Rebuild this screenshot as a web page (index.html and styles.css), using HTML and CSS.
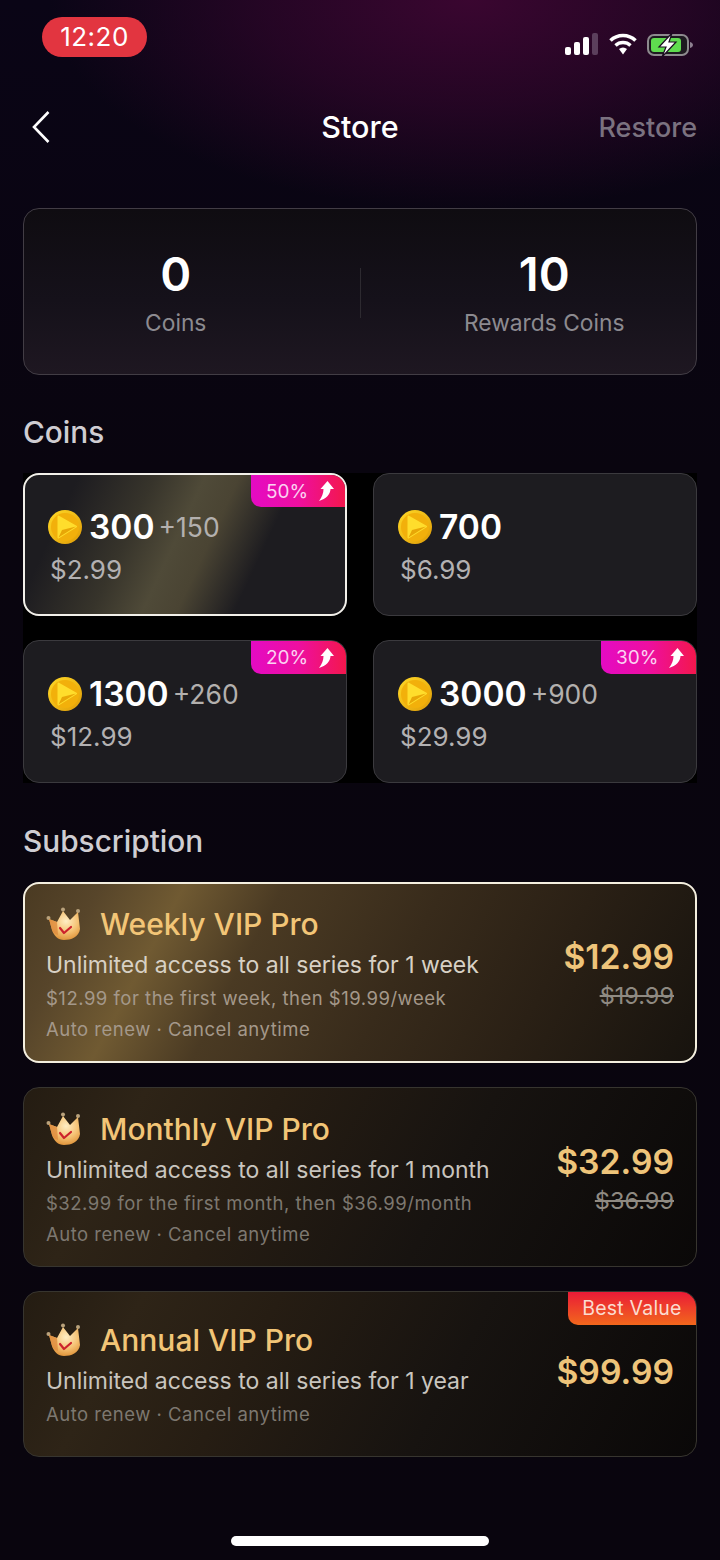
FILE: index.html
```html
<!DOCTYPE html>
<html>
<head lang="en">
    <meta charset="UTF-8">
    <title>Store</title>
    <link rel="stylesheet" href="styles.css">
</head>
<body>
<svg class="defs" width="0" height="0">
    <defs>
        <linearGradient id="coinEdge" x1="0" y1="0" x2="1" y2="1">
            <stop offset="0" stop-color="#ffd928"/>
            <stop offset="1" stop-color="#e09c06"/>
        </linearGradient>
        <radialGradient id="crownFill" cx="0.55" cy="0.35" r="0.7">
            <stop offset="0" stop-color="#ffeec4"/>
            <stop offset="0.55" stop-color="#f5c274"/>
            <stop offset="1" stop-color="#dc8d32"/>
        </radialGradient>
        <symbol id="coin" viewBox="0 0 34 34">
            <circle cx="17" cy="17" r="17" fill="url(#coinEdge)"/>
            <circle cx="17" cy="17" r="14" fill="#f2b00b"/>
            <path d="M10.500 6.500 L28 16.500 L10.500 27.500 Z" fill="#ffdd2c" stroke="#ffdd2c" stroke-width="2" stroke-linejoin="round"/>
            <path d="M10.500 27.500 L28 16.500 L14 20 Z" fill="#e8a707"/>
        </symbol>
        <symbol id="crown" viewBox="0 0 36 34">
            <circle cx="2.500" cy="11" r="2" fill="#b9a27c"/>
            <circle cx="17" cy="2.500" r="2" fill="#b9a27c"/>
            <circle cx="32" cy="4" r="2" fill="#b9a27c"/>
            <path d="M3 12 L11 15 L17 4 L24 13 L32 5 L34 22 C33 30 25 33 18 33 C12 33 8 29 6 23 Z" fill="url(#crownFill)"/>
            <path d="M3 12 L11 15 L12 28 C8 27 7 25 6 23 Z" fill="#df8c3f" opacity="0.8"/>
            <path d="M14 21 L18 26 L25 20" fill="none" stroke="#cc222c" stroke-width="2.200" stroke-linecap="round" stroke-linejoin="round"/>
        </symbol>
        <symbol id="arrow" viewBox="0 0 16 20">
            <path d="M9.500 0 L16 8 L12.500 8 C12.500 13 8 18 1 20 C4 16 5.500 12 5.500 8 L2.500 8 Z" fill="#fff"/>
        </symbol>
    </defs>
</svg>

<div class="page">
    <div class="status-bar">
        <div class="time">12:20</div>
        <div class="status-icons">
            <svg width="34" height="22" viewBox="0 0 34 22">
                <rect x="0" y="14" width="6" height="8" rx="2" fill="#fff"/>
                <rect x="9" y="9" width="6" height="13" rx="2" fill="#fff"/>
                <rect x="18" y="4" width="6" height="18" rx="2" fill="#fff"/>
                <rect x="27" y="0" width="6" height="22" rx="2" fill="#5b3f5c"/>
            </svg>
            <svg width="28" height="22" viewBox="0 0 28 22">
                <path d="M1.500 7.500 A18 18 0 0 1 26.500 7.500" fill="none" stroke="#fff" stroke-width="3.600"/>
                <path d="M6.500 12.500 A11 11 0 0 1 21.500 12.500" fill="none" stroke="#fff" stroke-width="3.400"/>
                <path d="M10 16 L14 21.500 L18 16 A6 6 0 0 0 10 16 Z" fill="#fff"/>
            </svg>
            <svg width="47" height="24" viewBox="0 0 47 24">
                <rect x="1" y="2" width="40" height="20" rx="6" fill="#1e1a20" stroke="#8d8a8e" stroke-width="2"/>
                <rect x="4" y="5" width="30" height="14" rx="3" fill="#5fdc4f"/>
                <path d="M43 9 C45 9.500 46 11 46 12 C46 13 45 14.500 43 15 Z" fill="#8d8090"/>
                <path d="M25 0 L12 14 L19 14 L15 24 L29 9 L22 9 Z" fill="#fff" stroke="#1a0a20" stroke-width="1.200"/>
            </svg>
        </div>
    </div>

    <div class="nav">
        <svg class="back" width="20" height="34" viewBox="0 0 20 34">
            <path d="M17.500 2 L3 17 L17.500 32" fill="none" stroke="#fff" stroke-width="2.600"/>
        </svg>
        <div class="nav-title">Store</div>
        <div class="restore">Restore</div>
    </div>

    <div class="summary">
        <div class="summary-item">
            <div class="summary-num">0</div>
            <div class="summary-label">Coins</div>
        </div>
        <div class="summary-line"></div>
        <div class="summary-item">
            <div class="summary-num">10</div>
            <div class="summary-label">Rewards Coins</div>
        </div>
    </div>

    <h2 class="section-title">Coins</h2>
    <div class="coin-grid">
        <div class="coin-card current">
            <div class="discount">50% <svg width="16" height="20"><use href="#arrow"/></svg></div>
            <div class="coin-row"><svg class="coin" width="34" height="34"><use href="#coin"/></svg><span class="amount">300</span><span class="bonus">+150</span></div>
            <div class="coin-price">$2.99</div>
        </div>
        <div class="coin-card">
            <div class="coin-row"><svg class="coin" width="34" height="34"><use href="#coin"/></svg><span class="amount">700</span></div>
            <div class="coin-price">$6.99</div>
        </div>
        <div class="coin-card">
            <div class="discount">20% <svg width="16" height="20"><use href="#arrow"/></svg></div>
            <div class="coin-row"><svg class="coin" width="34" height="34"><use href="#coin"/></svg><span class="amount">1300</span><span class="bonus">+260</span></div>
            <div class="coin-price">$12.99</div>
        </div>
        <div class="coin-card">
            <div class="discount">30% <svg width="16" height="20"><use href="#arrow"/></svg></div>
            <div class="coin-row"><svg class="coin" width="34" height="34"><use href="#coin"/></svg><span class="amount">3000</span><span class="bonus">+900</span></div>
            <div class="coin-price">$29.99</div>
        </div>
    </div>

    <h2 class="section-title sub-title">Subscription</h2>
    <div class="sub-list">
        <div class="sub-card current">
            <div class="sub-info">
                <div class="sub-name"><svg width="36" height="34"><use href="#crown"/></svg>Weekly VIP Pro</div>
                <div class="sub-desc">Unlimited access to all series for 1 week</div>
                <div class="sub-note">$12.99 for the first week, then $19.99/week</div>
                <div class="sub-note">Auto renew · Cancel anytime</div>
            </div>
            <div class="sub-price">
                <div class="price-now">$12.99</div>
                <div class="price-old">$19.99</div>
            </div>
        </div>
        <div class="sub-card">
            <div class="sub-info">
                <div class="sub-name"><svg width="36" height="34"><use href="#crown"/></svg>Monthly VIP Pro</div>
                <div class="sub-desc">Unlimited access to all series for 1 month</div>
                <div class="sub-note">$32.99 for the first month, then $36.99/month</div>
                <div class="sub-note">Auto renew · Cancel anytime</div>
            </div>
            <div class="sub-price">
                <div class="price-now">$32.99</div>
                <div class="price-old">$36.99</div>
            </div>
        </div>
        <div class="sub-card short">
            <div class="best">Best Value</div>
            <div class="sub-info">
                <div class="sub-name"><svg width="36" height="34"><use href="#crown"/></svg>Annual VIP Pro</div>
                <div class="sub-desc">Unlimited access to all series for 1 year</div>
                <div class="sub-note">Auto renew · Cancel anytime</div>
            </div>
            <div class="sub-price">
                <div class="price-now">$99.99</div>
            </div>
        </div>
    </div>

    <div class="home-bar"></div>
</div>
</body>
</html>
```

FILE: styles.css
```css
* {
    margin: 0;
    padding: 0;
    box-sizing: border-box;
}

html, body {
    width: 720px;
    height: 1560px;
    overflow: hidden;
    background-color: #07040d;
}

.defs {
    position: absolute;
}

.page {
    width: 720px;
    height: 1560px;
    padding: 0 23px;
    font-family: Inter, "Liberation Sans", sans-serif;
    color: #fff;
    background:
        radial-gradient(ellipse 420px 210px at 470px 0, #3a0630 0%, rgba(58, 6, 48, 0.55) 50%, rgba(58, 6, 48, 0) 100%),
        linear-gradient(180deg, #0a0516 0%, #09050f 30%, #09050e 100%);
}

/* status bar */
.status-bar {
    height: 101px;
    padding: 17px 3px 0 19px;
    display: flex;
    justify-content: space-between;
}
.time {
    width: 105px;
    height: 40px;
    line-height: 40px;
    border-radius: 20px;
    background-color: #e23540;
    font-size: 26px;
    letter-spacing: 0.5px;
    text-align: center;
}
.status-icons {
    display: flex;
    gap: 10px;
    height: 40px;
    padding-top: 16px;
    align-items: flex-start;
}

/* nav */
.nav {
    height: 52px;
    display: flex;
    align-items: center;
    justify-content: space-between;
    margin-bottom: 55px;
    position: relative;
    padding-left: 8px;
}
.nav-title {
    width: 100%;
    position: absolute;
    left: 0;
    padding-bottom: 2px;
    text-align: center;
    font-size: 30.500px;
    font-weight: 500;
}
.restore {
    font-size: 27px;
    font-weight: 500;
    color: #7b7280;
}

/* 金币汇总 */
.summary {
    height: 167px;
    padding-top: 3px;
    display: flex;
    align-items: center;
    border: 1px solid #423d45;
    border-radius: 16px;
    background: linear-gradient(180deg, #0f0c11 0%, #15111a 55%, #1e1721 100%);
}
.summary-item {
    flex: 1;
    text-align: center;
}
.summary-num {
    font-size: 47px;
    line-height: 52px;
    font-weight: 600;
}
.summary-label {
    margin-top: 8px;
    font-size: 22.800px;
    line-height: 30px;
    color: #8c8a90;
}
.summary-line {
    width: 1px;
    height: 50px;
    margin: 0 32px;
    background-color: #2d2a30;
}

.section-title {
    height: 40px;
    margin-top: 37px;
    margin-bottom: 21px;
    line-height: 40px;
    font-size: 29.800px;
    font-weight: 500;
    color: #cfcdd2;
}
.sub-title {
    margin-top: 38px;
}

/* 金币卡片 */
.coin-grid {
    display: grid;
    grid-template-columns: 324px 324px;
    justify-content: space-between;
    grid-auto-rows: 143px;
    row-gap: 24px;
    background-color: #000;
}
.coin-card {
    position: relative;
    padding: 35px 0 0 24px;
    border: 1px solid #3b3a3e;
    border-radius: 16px;
    background-color: #1d1c20;
    overflow: hidden;
}
.coin-card.current {
    border: 2px solid #f2f0ea;
    padding: 34px 0 0 23px;
    background: linear-gradient(115deg, #1d1c20 14%, #37342b 34%, #4f4a38 47%, #4a4433 56%, #1d1c20 71%);
}
.coin-row {
    display: flex;
    align-items: center;
    height: 36px;
}
.coin {
    flex: none;
    margin-right: 7px;
}
.amount {
    font-size: 33.500px;
    font-weight: 600;
}
.bonus {
    margin-left: 4px;
    font-size: 26.500px;
    color: #b3b0ae;
}
.coin-price {
    margin-top: 8px;
    padding-left: 2px;
    font-size: 26px;
    line-height: 34px;
    color: #b3b1b2;
}
.discount {
    position: absolute;
    top: 0;
    right: 0;
    width: 95px;
    height: 33px;
    padding-left: 15px;
    display: flex;
    align-items: center;
    gap: 10px;
    border-bottom-left-radius: 10px;
    background: linear-gradient(90deg, #e40bc3 0%, #ee0fa0 50%, #f3174d 100%);
    font-size: 19px;
    color: #fbd2f2;
}
.current .discount {
    width: 94px;
    height: 32px;
}

/* 订阅卡片 */
.sub-list {
    display: flex;
    flex-direction: column;
    gap: 24px;
}
.sub-card {
    position: relative;
    height: 180.500px;
    padding: 21px 22px 0 22px;
    display: flex;
    justify-content: space-between;
    border: 1px solid #37352f;
    border-radius: 16px;
    background: linear-gradient(118deg, #241c12 0%, #2e2417 16%, #261d13 34%, #171310 62%, #0a0808 100%);
    overflow: hidden;
}
.sub-card.current {
    border: 2px solid #f4efdf;
    padding: 20px 21px 0 21px;
    background: linear-gradient(118deg, #4a3a22 0%, #57452a 10%, #705a32 21%, #4a3a23 34%, #382b1b 55%, #2a2015 75%, #17130e 100%);
}
.sub-card.short {
    height: 166px;
    padding-top: 28px;
}
.sub-name {
    display: flex;
    align-items: center;
    gap: 18px;
    height: 40px;
    font-size: 30px;
    font-weight: 500;
    color: #f2c577;
}
.sub-desc {
    margin-top: 4px;
    font-size: 23px;
    line-height: 34px;
    color: #c9c5bf;
}
.sub-note {
    margin-top: 1px;
    font-size: 18.500px;
    line-height: 30px;
    letter-spacing: 0.5px;
    color: #7d7870;
}
.current .sub-note {
    color: #a4988a;
}
.current .sub-desc {
    color: #d8d1c5;
}
.sub-price {
    margin-top: 32px;
    text-align: right;
}
.price-now {
    font-size: 33.700px;
    line-height: 42px;
    font-weight: 600;
    color: #eec47a;
}
.price-old {
    font-size: 23.500px;
    line-height: 36px;
    color: #8f8a82;
    text-decoration: line-through;
}
.short .sub-price {
    margin-top: 31px;
}
.best {
    position: absolute;
    top: 0;
    right: 0;
    width: 128px;
    height: 33px;
    line-height: 33px;
    text-align: center;
    border-bottom-left-radius: 10px;
    background: linear-gradient(180deg, #ea1b37 0%, #f2671c 100%);
    font-size: 19.500px;
    letter-spacing: 0.2px;
    color: #fbdcd0;
}

.home-bar {
    width: 258px;
    height: 10px;
    margin: 79px auto 0;
    border-radius: 5px;
    background-color: #fff;
}
.back {
    flex: none;
}
```
